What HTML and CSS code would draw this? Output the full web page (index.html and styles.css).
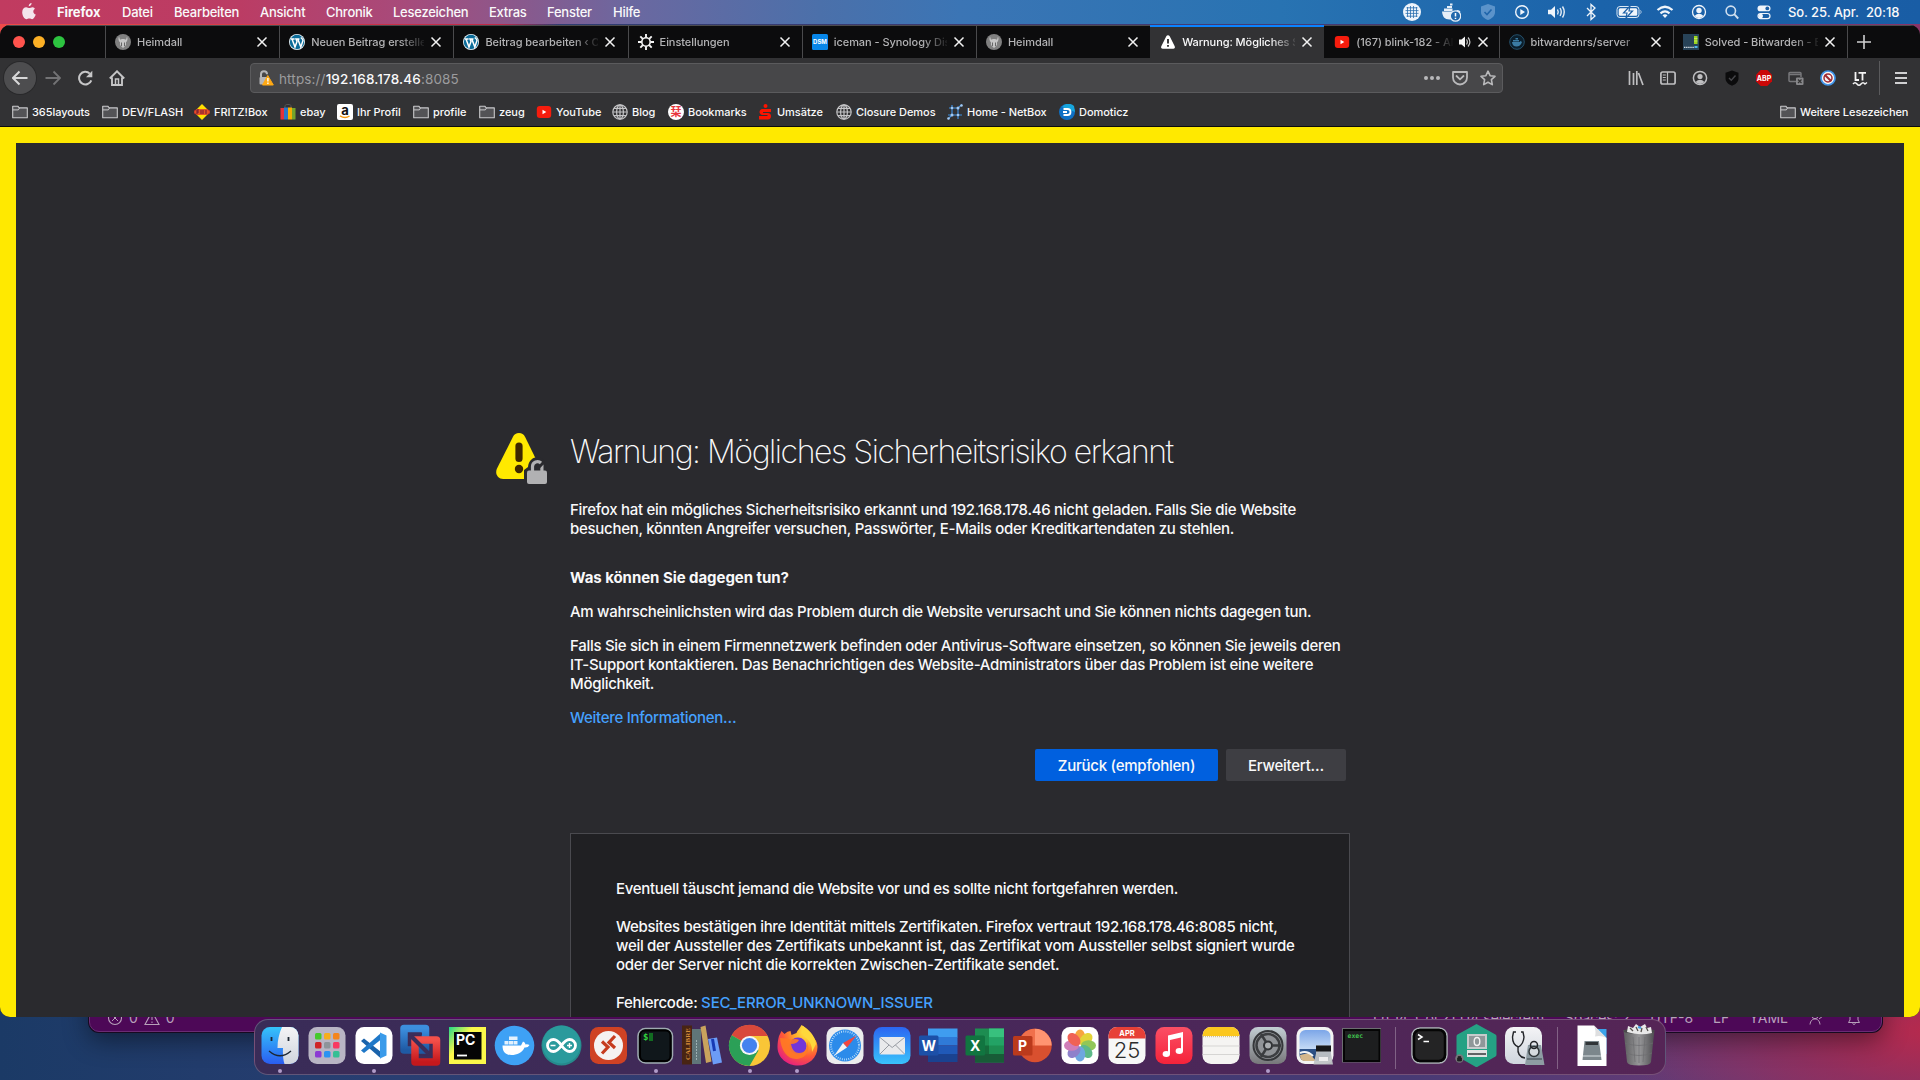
FILE: index.html
```html
<!DOCTYPE html>
<html lang="de">
<head>
<meta charset="utf-8">
<title>Warnung: Mögliches Sicherheitsrisiko erkannt</title>
<link rel="stylesheet" href="styles.css">
</head>
<body>
<svg class="defs" aria-hidden="true">
  <defs>
    <symbol id="folder" viewBox="0 0 16 16"><path d="M.7 13.8V2.2h5.1l1.4 1.7h8.1v9.9z" fill="#535356" stroke="#c9c9cb" stroke-width="1.1" stroke-linejoin="round"/><path d="M.7 5.9h5.6l1.2-1.8" fill="none" stroke="#c9c9cb"/></symbol>
    <symbol id="globe" viewBox="0 0 16 16"><g fill="none" stroke="#c4c4c6" stroke-width="1.2"><circle cx="8" cy="8" r="7.2"/><ellipse cx="8" cy="8" rx="3.4" ry="7.2"/><path d="M8 1v14M1 8h14M2 4.4h12M2 11.6h12"/></g></symbol>
    <symbol id="close" viewBox="0 0 12 12"><path d="M1.500 1.500l9 9m0-9l-9 9" stroke="#f2f2f2" stroke-width="1.500" fill="none"/></symbol>
    <symbol id="heimdall" viewBox="0 0 16 16"><circle cx="8" cy="8" r="8" fill="#808080"/><path d="M4 2.500c-1 2.500-.5 4.500 1 5.800L5 11l3 3 3-3v-2.700c1.500-1.300 2-3.300 1-5.800l-1 3.200C10 4.600 6 4.600 5 5.700z" fill="#c6c6c6"/><path d="M6.500 8.500v3.500m3-3.500v3.500" stroke="#666" fill="none"/></symbol>
    <symbol id="wordpress" viewBox="0 0 16 16"><circle cx="8" cy="8" r="8" fill="#e8f3f8"/><circle cx="8" cy="8" r="7.200" fill="#0b6c99"/><path d="M2 5h3.600M3 5l3 8 2-5.500L7 5h3.500M8.800 5l3 8 2.200-6.500c-.2-1.600-1.500-2.300-2.200-3" fill="none" stroke="#fff" stroke-width="1.500"/></symbol>
    <symbol id="youtube" viewBox="0 0 16 16"><rect x=".8" y="2" width="14.400" height="12" rx="3" fill="#f61c0d"/><path d="M6.500 5.700v4.600l3.800-2.300z" fill="#fff"/></symbol>
    <linearGradient id="gFinder" x2="0" y2="1"><stop stop-color="#35c4fb"/><stop offset="1" stop-color="#2a5df0"/></linearGradient>
    <linearGradient id="gGrey" x2="0" y2="1"><stop stop-color="#f4f4f6"/><stop offset="1" stop-color="#cfd5dd"/></linearGradient>
    <linearGradient id="gMail" x2="0" y2="1"><stop stop-color="#2b66f2"/><stop offset="1" stop-color="#39c3fb"/></linearGradient>
    <linearGradient id="gMusic" x2="0" y2="1"><stop stop-color="#fb4f65"/><stop offset="1" stop-color="#f5233a"/></linearGradient>
    <linearGradient id="gPy" x2="1" y2=".8"><stop stop-color="#21d789"/><stop offset=".4" stop-color="#fcf84a"/></linearGradient>
    <linearGradient id="gPref" x2="0" y2="1"><stop stop-color="#c3ced4"/><stop offset="1" stop-color="#77777a"/></linearGradient>
    <linearGradient id="gBlue" x2="0" y2="1"><stop stop-color="#3c8ede"/><stop offset="1" stop-color="#1f5aa4"/></linearGradient>
    <linearGradient id="gRed" x2="0" y2="1"><stop stop-color="#f4504a"/><stop offset="1" stop-color="#c5181c"/></linearGradient>
    <radialGradient id="gFox" cx=".75" cy=".15" r="1"><stop stop-color="#fff44f"/><stop offset=".3" stop-color="#ffb429"/><stop offset=".62" stop-color="#ff5a36"/><stop offset="1" stop-color="#e0158e"/></radialGradient>
    <linearGradient id="gTrash" x2="1"><stop stop-color="#5b5b5d"/><stop offset=".5" stop-color="#98989a"/><stop offset="1" stop-color="#4d4d50"/></linearGradient>
    <linearGradient id="gSky" x2="0" y2="1"><stop stop-color="#7ca6e8"/><stop offset=".6" stop-color="#c3d9f5"/><stop offset=".62" stop-color="#2d5389"/><stop offset="1" stop-color="#234472"/></linearGradient>
  </defs>
</svg>

<header class="menubar">
  <nav class="menus">
    <svg class="apple" viewBox="0 0 14 17"><path d="M9.600 0c.1 1.700-1.300 3.300-2.900 3.300C6.500 1.700 8 .2 9.600 0zM12.900 5.700c-2.500 1.600-1.900 4.800.9 5.900-.7 2-2.200 4.600-3.700 4.600-1 0-1.500-.6-2.800-.6s-1.900.6-2.800.6C2.400 16.200.2 12.500.2 9.200c0-3.200 2-5 4-5 1.300 0 2.300.8 3.100.8.700 0 2-.9 3.400-.8 1 .1 1.800.6 2.200 1.500z" fill="#f4e4ec"/></svg>
    <b>Firefox</b><span>Datei</span><span>Bearbeiten</span><span>Ansicht</span><span>Chronik</span><span>Lesezeichen</span><span>Extras</span><span>Fenster</span><span>Hilfe</span>
  </nav>
  <div class="status">
    <svg viewBox="0 0 20 20"><circle cx="10" cy="10" r="9" fill="#edf4fb"/><path d="M4.500 5.800h11M3.500 8.600h13M3.500 11.400h13M4.500 14.200h11M5.500 5v10M8.500 4v12M11.500 4v12M14.500 5v10" stroke="#2a6eaf" stroke-width=".8"/></svg>
    <svg viewBox="0 0 20 20"><path d="M1 9.500h13l2.500-1.500c1.500 0 2 1 3 1.500-1 1-2 1.500-3 1.500-2 5-5 6.500-8 6.500-5 0-7-3-7.500-8z" fill="#e5eef8"/><path d="M3 6.500h8.500v2.500H3zM6 4h5v2H6zM9 1.500h2.500v2H9z" fill="#e5eef8"/><circle cx="14.500" cy="14" r="5.200" fill="#2268ac" stroke="#e5eef8" stroke-width="1.300"/><path d="M14.500 11v3.500m0 1.200v1.300" stroke="#fff" stroke-width="1.500"/></svg>
    <svg viewBox="0 0 20 20"><path d="M10 2l7 2.500V10c0 4-3 6.500-7 8-4-1.500-7-4-7-8V4.500z" fill="#5b93ca"/><path d="M6.500 10l2.500 2.500 4.500-5" fill="none" stroke="#1f65aa" stroke-width="1.600"/></svg>
    <svg viewBox="0 0 20 20"><circle cx="10" cy="10" r="6.300" fill="none" stroke="#f0f5fb" stroke-width="1.400"/><path d="M8.300 7v6l4.700-3z" fill="#f0f5fb"/></svg>
    <svg viewBox="0 0 20 20"><path d="M1 7.800h3L8 4v12l-4-3.800H1z" fill="#f0f5fb"/><path d="M10.500 7.500q1.500 2.500 0 5M13 6q2.500 4 0 8M15.500 4.500q3.500 5.500 0 11" fill="none" stroke="#e6eef7" stroke-width="1.400"/></svg>
    <svg viewBox="0 0 20 20"><path d="M6 6l8 8-4 3.500v-15L14 6l-8 8" fill="none" stroke="#f0f5fb" stroke-width="1.300"/></svg>
    <svg viewBox="0 0 28 20"><rect x="2" y="4.500" width="22" height="11" rx="3" fill="none" stroke="#dce8f4"/><rect x="3.700" y="6.200" width="18.600" height="7.600" rx="1.500" fill="#f0f5fb"/><path d="M15 4l-6.500 7h3.500l-1 5 6.500-7H14z" fill="#f4f8fc" stroke="#1d60a6" stroke-width="1.200"/><path d="M25.500 8.300q1.500 1.700 0 3.400" stroke="#a9c5e1" fill="none"/></svg>
    <svg viewBox="0 0 20 20"><g fill="none" stroke="#f0f5fb" stroke-width="2.200"><path d="M2.500 8q7.500-6.500 15 0M5.500 11.300q4.500-3.800 9 0"/></g><path d="M7.500 13.300q2.500-2 5 0L10 16z" fill="#f0f5fb"/></svg>
    <svg viewBox="0 0 20 20"><circle cx="10" cy="10" r="6.500" fill="none" stroke="#f0f5fb" stroke-width="1.300"/><circle cx="10" cy="8.500" r="2.700" fill="#f0f5fb"/><path d="M5.500 14q4.500-4.500 9 0-4.500 4-9 0z" fill="#f0f5fb"/></svg>
    <svg viewBox="0 0 20 20"><circle cx="8.800" cy="8.800" r="4.700" fill="none" stroke="#cfdfef" stroke-width="1.600"/><path d="M12.200 12.200l4 4.300" stroke="#cfdfef" stroke-width="1.900"/></svg>
    <svg viewBox="0 0 20 20"><rect x="3.500" y="3.500" width="13" height="5.800" rx="2.900" fill="#f0f5fb"/><circle cx="13.300" cy="6.400" r="1.900" fill="#1b5fa6"/><rect x="4" y="11.500" width="12" height="5.200" rx="2.600" fill="none" stroke="#f0f5fb" stroke-width="1.200"/><circle cx="6.700" cy="14.100" r="2.300" fill="#f0f5fb"/></svg>
    <span class="date">So. 25. Apr.</span><span class="time">20:18</span>
  </div>
</header>

<section class="editor">
  <div class="editor-left">
    <svg viewBox="0 0 16 16"><circle cx="8" cy="8" r="6.500" fill="none" stroke="#b7a1ba" stroke-width="1.100"/><path d="M5 5l6 6m0-6l-6 6" stroke="#b7a1ba"/></svg><span>0</span>
    <svg viewBox="0 0 16 16"><path d="M8 1.500l7 13H1z" fill="none" stroke="#b7a1ba" stroke-width="1.100"/><path d="M8 6v4m0 1.500v1.500" stroke="#b7a1ba"/></svg><span>0</span>
  </div>
  <div class="editor-right">
    <span>Ln 14, Col 21 (14 selected)</span><span>Spaces: 2</span><span>UTF-8</span><span>LF</span><span>YAML</span>
    <svg viewBox="0 0 16 16"><circle cx="7" cy="5.500" r="3.200" fill="none" stroke="#b7a1ba"/><path d="M2 14.500c.5-4 2.500-5.500 5-5.500s4.500 1.500 5 5.500M11 9l4-3" fill="none" stroke="#b7a1ba"/></svg>
    <svg viewBox="0 0 16 16"><path d="M2.500 12.500h11L12 10V6a4 4 0 0 0-8 0v4zM6.500 13.500q1.500 2 3 0" fill="none" stroke="#b7a1ba"/></svg>
  </div>
</section>

<main class="window">
  <div class="tabs">
    <div class="lights"><i class="red"></i><i class="amber"></i><i class="green"></i></div>
    <div class="tab"><svg class="fav"><use href="#heimdall"/></svg><span>Heimdall</span><svg class="x"><use href="#close"/></svg></div>
    <div class="tab"><svg class="fav"><use href="#wordpress"/></svg><span>Neuen Beitrag erstellen</span><svg class="x"><use href="#close"/></svg></div>
    <div class="tab"><svg class="fav"><use href="#wordpress"/></svg><span>Beitrag bearbeiten ‹ Con</span><svg class="x"><use href="#close"/></svg></div>
    <div class="tab"><svg class="fav" viewBox="0 0 16 16"><circle cx="8" cy="8" r="4.200" fill="none" stroke="#f5f5f5" stroke-width="1.600"/><path d="M8 0v3.500M8 12.500V16M0 8h3.500M12.500 8H16M2.300 2.300l2.500 2.500M11.200 11.200l2.500 2.500M13.700 2.300l-2.500 2.500M4.800 11.200l-2.500 2.500" stroke="#f5f5f5" stroke-width="1.900"/></svg><span>Einstellungen</span><svg class="x"><use href="#close"/></svg></div>
    <div class="tab"><svg class="fav" viewBox="0 0 16 16"><rect width="16" height="16" rx="1.500" fill="#0786e8"/><text x="8" y="10.300" text-anchor="middle" class="dsm">DSM</text></svg><span>iceman - Synology DiskSt</span><svg class="x"><use href="#close"/></svg></div>
    <div class="tab"><svg class="fav"><use href="#heimdall"/></svg><span>Heimdall</span><svg class="x"><use href="#close"/></svg></div>
    <div class="tab active"><svg class="fav" viewBox="0 0 16 16"><path d="M8 1.200c.8 0 1.300.4 1.700 1.100l5 10c.7 1.400-.1 2.500-1.500 2.500H2.800c-1.400 0-2.200-1.100-1.500-2.500l5-10C6.700 1.600 7.200 1.200 8 1.200z" fill="#fff"/><path d="M8 5v4.500m0 1.500v1.800" stroke="#323234" stroke-width="1.900"/></svg><span>Warnung: Mögliches Siche</span><svg class="x"><use href="#close"/></svg></div>
    <div class="tab noisy"><svg class="fav"><use href="#youtube"/></svg><span>(167) blink-182 - All</span><svg class="snd" viewBox="0 0 14 14"><path d="M1 4.500h2.500L7 1.500v11L3.500 9.500H1z" fill="#f5f5f5"/><path d="M8.500 4.500q1.700 2.500 0 5M10 2.500q3.800 4.500 0 9" fill="none" stroke="#ccc" stroke-width="1.200"/></svg><svg class="x"><use href="#close"/></svg></div>
    <div class="tab"><svg class="fav" viewBox="0 0 16 16"><circle cx="8" cy="8" r="7.300" fill="#0b1e2b" stroke="#25506b"/><path d="M3 8h7.500l1-1 1.500 1c-1 3-3 4.500-5.500 4.500S3.200 11 3 8zM4 6h6v1.500H4zM6.500 4h2.500v1.500H6.500z" fill="#3b7ba3"/></svg><span>bitwardenrs/server</span><svg class="x"><use href="#close"/></svg></div>
    <div class="tab"><svg class="fav" viewBox="0 0 16 16"><rect width="16" height="16" fill="#284358"/><path d="M11 2h3.500v8H11z" fill="#9ad51e"/><path d="M11 4.500h3.500M11 7h3.500" stroke="#dff08a" stroke-width=".6"/><path d="M11.500 12h3v2h-3z" fill="#4fb5e8"/><path d="M1 13.300h10" stroke="#d8dfe4" stroke-width="1.300" stroke-dasharray="1.400 .7"/></svg><span>Solved - Bitwarden - Buil</span><svg class="x"><use href="#close"/></svg></div>
    <div class="newtab"><svg viewBox="0 0 16 16"><path d="M8 1v14M1 8h14" stroke="#d0d0d1" stroke-width="1.600"/></svg></div>
  </div>

  <div class="toolbar">
    <div class="nav">
      <span class="back"><svg viewBox="0 0 16 16"><path d="M15.500 8H1.200M7.500 1.500L1 8l6.500 6.500" fill="none" stroke="#d7d7d8" stroke-width="2"/></svg></span>
      <svg viewBox="0 0 16 16"><path d="M.5 8h14.300M8.500 1.500L15 8l-6.500 6.500" fill="none" stroke="#737375" stroke-width="1.800"/></svg>
      <svg viewBox="0 0 16 16"><path d="M14.300 10.300A6.300 6.300 0 1 1 12.800 3.600" fill="none" stroke="#c6c6c7" stroke-width="2"/><path d="M15.300.8v6.400H9z" fill="#c6c6c7"/></svg>
      <svg viewBox="0 0 16 16"><path d="M.8 8.500L8 1.300l7.200 7.200M3 7.500v7.500h10V7.500" fill="none" stroke="#c6c6c7" stroke-width="1.900"/><path d="M6.500 15V9h3v6" fill="none" stroke="#c6c6c7" stroke-width="1.500"/></svg>
    </div>
    <div class="urlbar">
      <svg class="lock" viewBox="0 0 16 16"><path d="M3 7V4.200a3 3 0 0 1 6 0" fill="none" stroke="#b6b6b8" stroke-width="2"/><rect x="1.500" y="7" width="9" height="7.500" rx="1" fill="#b6b6b8"/><path d="M9.800 5.500L15.300 15H4.500z" fill="#ffa914" stroke="#ffa914" stroke-linejoin="round"/><path d="M9.900 8v3.500m0 1v1.500" stroke="#fff" stroke-width="1.400"/></svg>
      <span class="url">https://<b>192.168.178.46</b>:8085</span>
      <svg viewBox="0 0 16 16"><g fill="#b9b9bb"><circle cx="2" cy="8" r="2"/><circle cx="8" cy="8" r="2"/><circle cx="14" cy="8" r="2"/></g></svg>
      <svg viewBox="0 0 16 16"><path d="M1 2h14v5.500a7 7 0 0 1-14 0z" fill="none" stroke="#b9b9bb" stroke-width="1.800" stroke-linejoin="round"/><path d="M4.500 6L8 9.300 11.500 6" fill="none" stroke="#b9b9bb" stroke-width="1.800" stroke-linecap="round"/></svg>
      <svg viewBox="0 0 16 16"><path d="M8 1.200l2.100 4.500 4.900.6-3.600 3.400.9 4.900L8 12.200l-4.300 2.400.9-4.900L1 6.300l4.900-.6z" fill="none" stroke="#b9b9bb" stroke-width="1.600" stroke-linejoin="round"/></svg>
    </div>
    <div class="tools">
      <svg viewBox="0 0 16 16"><path d="M1.500 1v14M5.500 3v12M8.800 1v14M10.500 3l4.500 12" fill="none" stroke="#bebec0" stroke-width="1.700"/></svg>
      <svg viewBox="0 0 16 16"><rect x=".9" y="2" width="14.200" height="12" rx="1.800" fill="none" stroke="#bebec0" stroke-width="1.700"/><path d="M7.500 2v12M2.800 5h3M2.800 7.500h3M2.800 10h3" stroke="#bebec0" stroke-width="1.200"/></svg>
      <svg viewBox="0 0 16 16"><circle cx="8" cy="8" r="6.600" fill="none" stroke="#bebec0" stroke-width="1.500"/><circle cx="8" cy="6.500" r="2.600" fill="#bebec0"/><path d="M3.500 12q4.500-4.500 9 0-4.500 4-9 0z" fill="#bebec0"/></svg>
      <svg viewBox="0 0 16 16"><path d="M8 .5l6.500 2.300V8c0 4-2.700 6.200-6.500 7.700C4.200 14.200 1.500 12 1.500 8V2.800z" fill="#0b0b0c"/><path d="M5 8l2.300 2.300L11.500 5.500" fill="none" stroke="#46464a" stroke-width="1.400"/></svg>
      <svg viewBox="0 0 16 16"><path d="M4.700 0h6.600L16 4.700v6.600L11.300 16H4.700L0 11.300V4.700z" fill="#cb0808"/><text x="8" y="10.700" text-anchor="middle" class="abp">ABP</text></svg>
      <svg viewBox="0 0 16 16"><path d="M9 11.500H2a1 1 0 0 1-1-1V3.500a1 1 0 0 1 1-1h10a1 1 0 0 1 1 1V7M1 4.500h12" fill="none" stroke="#77777a" stroke-width="1.500"/><rect x="8" y="7.500" width="7.500" height="7.500" rx="1" fill="#87878a"/><path d="M10 9.500l3.500 3.500m0-3.500L10 13" stroke="#333" stroke-width="1.200"/></svg>
      <svg viewBox="0 0 16 16"><circle cx="8" cy="8" r="7" fill="#f4f4f4" stroke="#3f93e8" stroke-width="1.700"/><circle cx="8" cy="8" r="4" fill="none" stroke="#a12a32" stroke-width="1.500"/><path d="M4.700 4.700l6.600 6.600" stroke="#a12a32" stroke-width="2"/></svg>
      <svg viewBox="0 0 16 16"><path d="M3.500 2v8H7M6.500 2.800H14M10.500 3v7.500" fill="none" stroke="#f4f4f4" stroke-width="1.800"/><path d="M1 14q2-2.500 4 0t4 0 4 0l2-1.500" fill="none" stroke="#f4f4f4" stroke-width="1.500"/></svg>
      <i class="bar"></i>
      <svg class="burger" viewBox="0 0 12 14"><path d="M0 2h12M0 7h12M0 12h12" stroke="#d0d0d1" stroke-width="1.800"/></svg>
    </div>
  </div>

  <div class="bookmarks">
    <a><svg><use href="#folder"/></svg>365layouts</a>
    <a><svg><use href="#folder"/></svg>DEV/FLASH</a>
    <a><svg viewBox="0 0 16 16"><path d="M8 0l5 5 3 3-3 3-5 5-5-5-3-3 3-3z" fill="#ffe000"/><path d="M0 6.500l3-1.500h10l3 1.500v3L13 11H3L0 9.500z" fill="#dc2430" opacity=".75"/><path d="M3 6v4m0-4h2m-2 2h2m2-2v4m2-4v4m3-4v4" stroke="#6d1638" fill="none"/></svg>FRITZ!Box</a>
    <a><svg viewBox="0 0 16 16"><path d="M5 4V1.800C5 0 11 0 11 1.800V4" fill="none" stroke="#555"/><path d="M.5 4H4v11.500H.5z" fill="#e53238"/><path d="M4 3.500h4v12H4z" fill="#2878c8"/><path d="M8 3.500h4v12H8z" fill="#f5af02"/><path d="M12 4h3.500v11.500H12z" fill="#74a52c"/></svg>ebay</a>
    <a><svg viewBox="0 0 16 16"><rect width="16" height="16" rx="2" fill="#fff"/><text x="8" y="10.500" text-anchor="middle" class="ama">a</text><path d="M3 11.800q5 3.200 9.500.2" fill="none" stroke="#f59a12" stroke-width="1.500"/></svg>Ihr Profil</a>
    <a><svg><use href="#folder"/></svg>profile</a>
    <a><svg><use href="#folder"/></svg>zeug</a>
    <a><svg><use href="#youtube"/></svg>YouTube</a>
    <a><svg><use href="#globe"/></svg>Blog</a>
    <a><svg viewBox="0 0 16 16"><circle cx="8" cy="8" r="8" fill="#fff"/><text x="8" y="12" text-anchor="middle" class="kanji">栞</text></svg>Bookmarks</a>
    <a><svg viewBox="0 0 16 16"><circle cx="8.500" cy="2" r="2" fill="#fb1400"/><path d="M14 5H5.500C1.500 5 1.500 11 5.500 11H10.500v1H2v3.500h9c4 0 4-6.500 0-6.500H6V8h8z" fill="#fb1400"/></svg>Umsätze</a>
    <a><svg><use href="#globe"/></svg>Closure Demos</a>
    <a><svg viewBox="0 0 16 16"><path d="M5 1v10H1M1 15l4-4h10M11 15V4M2 4h9l4-3.500" fill="none" stroke="#3d8ee0" stroke-width="1.200"/><g fill="#a5c8ef"><circle cx="5" cy="4" r="1.300"/><circle cx="11" cy="11" r="1.300"/><circle cx="5" cy="11" r="1.500"/><circle cx="11" cy="4" r="1.500"/><circle cx="1.500" cy="14.500" r="1.300"/><circle cx="14.500" cy="1.500" r="1.300"/></g></svg>Home - NetBox</a>
    <a><svg viewBox="0 0 16 16"><circle cx="8" cy="8" r="8" fill="#0e6fc4"/><path d="M3 3a8 8 0 0 1 12-1l1 6z" fill="#17a5dc"/><path d="M4.500 5H8.500a3 3 0 0 1 0 6H4.500M4 8h4" fill="none" stroke="#fff" stroke-width="1.800"/></svg>Domoticz</a>
    <a class="more"><svg><use href="#folder"/></svg>Weitere Lesezeichen</a>
  </div>

  <div class="viewport">
    <article class="warning">
      <svg class="warn-icon" viewBox="0 0 52 52"><path d="M23 0c2.800 0 4.700 1.300 6 3.700l15.500 31.800c2.300 5-.5 10.500-6 10.500H7.200c-5.500 0-8.600-5.500-6.200-10.500L17 3.700C18.300 1.300 20.200 0 23 0z" fill="#ffe900"/><path d="M19.400 13a3.600 3.600 0 0 1 7.200 0v12.500a3.600 3.600 0 0 1-7.200 0z" fill="#3e2800"/><circle cx="23" cy="36" r="4.200" fill="#3e2800"/><path d="M28 52V37l4-3c1-13 18-13 18 0l2 4v14z" fill="#2a2a2e"/><path d="M36.500 38v-4.500a5 5 0 0 1 8.500-3.500" fill="none" stroke="#b1b1b3" stroke-width="3.200"/><path d="M47.500 31.500V38h-3.200v-3z" fill="#b1b1b3"/><rect x="31" y="37.500" width="20" height="13.500" rx="2" fill="#b1b1b3"/></svg>
      <h1>Warnung: Mögliches Sicherheitsrisiko erkannt</h1>
      <div class="copy">
        <p>Firefox hat ein mögliches Sicherheitsrisiko erkannt und 192.168.178.46 nicht geladen. Falls Sie die Website<br>besuchen, könnten Angreifer versuchen, Passwörter, E-Mails oder Kreditkartendaten zu stehlen.</p>
        <h2>Was können Sie dagegen tun?</h2>
        <p>Am wahrscheinlichsten wird das Problem durch die Website verursacht und Sie können nichts dagegen tun.</p>
        <p>Falls Sie sich in einem Firmennetzwerk befinden oder Antivirus-Software einsetzen, so können Sie jeweils deren<br>IT-Support kontaktieren. Das Benachrichtigen des Website-Administrators über das Problem ist eine weitere<br>Möglichkeit.</p>
        <p><a class="link">Weitere Informationen…</a></p>
        <div class="buttons"><button class="primary">Zurück (empfohlen)</button><button>Erweitert…</button></div>
      </div>
      <div class="panel">
        <p>Eventuell täuscht jemand die Website vor und es sollte nicht fortgefahren werden.</p>
        <p>Websites bestätigen ihre Identität mittels Zertifikaten. Firefox vertraut 192.168.178.46:8085 nicht,<br>weil der Aussteller des Zertifikats unbekannt ist, das Zertifikat vom Aussteller selbst signiert wurde<br>oder der Server nicht die korrekten Zwischen-Zertifikate sendet.</p>
        <p>Fehlercode: <a class="link code">SEC_ERROR_UNKNOWN_ISSUER</a></p>
      </div>
    </article>
  </div>
</main>

<footer class="dock">
  <!-- Finder -->
  <span class="app on"><svg viewBox="0 0 47 48"><clipPath id="cf"><rect x="5.500" y="6" width="37" height="37" rx="8.500"/></clipPath><g clip-path="url(#cf)"><rect x="5" y="6" width="38" height="37" fill="url(#gFinder)"/><path d="M26 6c-3 7-4.500 13-4.500 21h5.500c-.3 6 0 11 1.500 16h15V6z" fill="url(#gGrey)"/></g><path d="M15.500 16v4M32.500 16v4" stroke="#1c2733" stroke-width="1.800"/><path d="M13 30q11 9.500 22 0" fill="none" stroke="#1c2733" stroke-width="1.300"/></svg></span>
  <!-- Launchpad -->
  <span class="app"><svg viewBox="0 0 47 48"><rect x="5.500" y="6" width="37" height="37" rx="8.500" fill="#b9b5c4"/><g><rect x="12" y="12" width="6.500" height="6.500" rx="1.500" fill="#46c92b"/><rect x="21" y="12" width="6.500" height="6.500" rx="1.500" fill="#f6ae1b"/><rect x="30" y="12" width="6.500" height="6.500" rx="1.500" fill="#f5851b"/><rect x="12" y="21" width="6.500" height="6.500" rx="1.500" fill="#cf2425"/><rect x="21" y="21" width="6.500" height="6.500" rx="1.500" fill="#8e949a"/><rect x="30" y="21" width="6.500" height="6.500" rx="1.500" fill="#f83a62"/><rect x="12" y="30" width="6.500" height="6.500" rx="1.500" fill="#8c3bd3"/><rect x="21" y="30" width="6.500" height="6.500" rx="1.500" fill="#2b93f2"/><rect x="30" y="30" width="6.500" height="6.500" rx="1.500" fill="#35bf94"/></g></svg></span>
  <!-- Visual Studio Code -->
  <span class="app on"><svg viewBox="0 0 47 48"><rect x="5.500" y="6" width="37" height="37" rx="8.500" fill="#fff"/><path d="M11 20l3-2.500L31 31v6.500z" fill="#1a63ab"/><path d="M11 29.500l3 2.500L31 18.500V12z" fill="#1f78c8"/><path d="M30 11.500l6.500 3v20L30 37.500z" fill="#3a9bea"/></svg></span>
  <!-- VMware Fusion -->
  <span class="app"><svg viewBox="0 0 47 48"><rect x="7" y="7.500" width="21.500" height="21.500" fill="none" stroke="url(#gBlue)" stroke-width="7.500" stroke-linejoin="round"/><path d="M18 19h21.500v22H18z" fill="none" stroke="url(#gRed)" stroke-width="7.500" stroke-linejoin="round"/><path d="M18 15h14v-4H18z" fill="none"/><path d="M14.500 15.500l17 17" stroke="#3b2d5a" stroke-width="4"/><path d="M13 25V13h12M34 25v11H22" stroke="#3b2d5a" stroke-width="2" fill="none"/></svg></span>
  <!-- PyCharm -->
  <span class="app"><svg viewBox="0 0 47 48"><rect x="5" y="6" width="37" height="37" fill="url(#gPy)"/><rect x="10" y="11" width="27.500" height="27.500" fill="#050505"/><text x="12" y="24" class="pc">PC</text><path d="M13 34.500h10" stroke="#fff" stroke-width="1.800"/></svg></span>
  <!-- Docker -->
  <span class="app"><svg viewBox="0 0 47 48"><circle cx="23.500" cy="24.500" r="19.800" fill="#3ea1f5"/><path d="M11.500 24.500H30l2-4q2.500 1 2.500 3 2-.5 4 .5-1.500 3-5 2.500C31 32 26 34 20.500 34c-6 0-9-3-9-9.500z" fill="#fff"/><path d="M13.500 20h4v3.500h-4zM18 20h4v3.500h-4zM22.500 20h4v3.500h-4zM18 15.500h8.500V19H18z" fill="#e3f1fd"/></svg></span>
  <!-- Arduino -->
  <span class="app"><svg viewBox="0 0 47 48"><circle cx="23.500" cy="24.500" r="20" fill="#268a8c"/><circle cx="23.500" cy="23.500" r="19" fill="#2a9a9c"/><path d="M23.500 24.500C20 19.500 17.500 18.500 15.500 18.500a6 6 0 0 0 0 12c2 0 4.500-1 8-6s6-6 8-6a6 6 0 0 1 0 12c-2 0-4.500-1-8-6z" fill="none" stroke="#fff" stroke-width="2.800"/><path d="M12.500 24.500h5M29 24.500h5m-2.500-2.500v5" stroke="#fff" stroke-width="1.400"/></svg></span>
  <!-- Remote Desktop -->
  <span class="app"><svg viewBox="0 0 47 48"><rect x="5" y="6" width="37" height="37" rx="8.500" fill="#cf4224"/><circle cx="23.500" cy="24.500" r="14.500" fill="#f5f2f2"/><path d="M17 20.500l6 5.500-6 6.500M30 15l-6 6.500 6 5.500" fill="none" stroke="#c63c20" stroke-width="3.200"/></svg></span>
  <!-- iTerm -->
  <span class="app on"><svg viewBox="0 0 47 48"><rect x="6" y="7.500" width="34.500" height="34.500" rx="7.500" fill="#10171b" stroke="#9faab0" stroke-width="1.500"/><rect x="8" y="9.500" width="30.500" height="30.500" rx="5" fill="none" stroke="#000" stroke-width="2"/><text x="11" y="19" class="term green-t">$</text><path d="M17 12h4v8h-4z" fill="#126c21"/></svg></span>
  <!-- Calibre -->
  <span class="app"><svg viewBox="0 0 47 48"><rect x="3" y="4.500" width="10" height="39" fill="#482413"/><rect x="13" y="8" width="9" height="35" fill="#607579"/><path d="M21.500 6l5-1.500 6 36-5.500 1.500z" fill="#c9a35d"/><path d="M29 18l9-1.500 5 25-9 2z" fill="#6c9cf6"/><path d="M33.500 18l2 12" stroke="#183ab4" stroke-width="3"/><text transform="rotate(-90 10.500 39)" x="10.500" y="39" class="cal">CALIBRE</text><path d="M17.500 19v21" stroke="#9db1b3" stroke-dasharray="2 1"/></svg></span>
  <!-- Chrome -->
  <span class="app on"><svg viewBox="0 0 47 48"><circle cx="23.500" cy="24.500" r="20.500" fill="#f9c637"/><path d="M23.500 24.500L5.700 14.200a20.500 20.500 0 0 1 35.600 0L42 15H23.500z" fill="#d9483b"/><path d="M23.500 24.500L5.700 14.200A20.500 20.500 0 0 0 23.500 45l9-15.500z" fill="#2ba057"/><path d="M5.700 14.200L15 30l8.500-5.500V15L6.200 13.500z" fill="none"/><circle cx="23.500" cy="24.500" r="9.600" fill="#f5f5f5"/><circle cx="23.500" cy="24.500" r="7.600" fill="#4482ef"/></svg></span>
  <!-- Firefox -->
  <span class="app on"><svg viewBox="0 0 47 48"><path d="M5 15l2.500-5 3 3q3-3 6-3l1 4 5-2c1-3 3-4 5-8 5 3 5 6 6 8 5 3 10 7 10 14 0 11-9 18.500-19.500 18.500S3.500 37 3.500 26c0-4 .5-7 1.500-11z" fill="url(#gFox)"/><circle cx="24" cy="25" r="8.500" fill="#7236d8"/><path d="M6 17q8 0 11 2 4-2 8 0-2 4-8 4c1 6 4 9 8 9 6 0 9-4 8-11 4 8-1 17-11 17-9 0-15-9-16-21z" fill="#ff7a24" opacity=".9"/><path d="M31 16c-3-4-3-7-2-11 5 3 12 9 13 18l-4 8c0-6-1-10-7-15z" fill="#ffd83b"/></svg></span>
  <!-- Safari -->
  <span class="app"><svg viewBox="0 0 47 48"><rect x="5.500" y="6" width="37" height="37" rx="8.500" fill="#ececee"/><circle cx="24" cy="24.500" r="16" fill="#2c8bea"/><circle cx="24" cy="24.500" r="14" fill="none" stroke="#c6e4fc" stroke-width="2" stroke-dasharray=".8 1.400"/><path d="M35.500 14.500L22 22l4 4.500z" fill="#f2463f"/><path d="M13 35l9-13 4 4.500z" fill="#f3f3f3"/></svg></span>
  <!-- Mail -->
  <span class="app"><svg viewBox="0 0 47 48"><rect x="5.500" y="6" width="37" height="37" rx="8.500" fill="url(#gMail)"/><rect x="11.500" y="16" width="25.500" height="17.500" rx="1.500" fill="#e9eaec"/><path d="M12 16.500l12.200 10L36.500 16.500M12 33l9-9M36.500 33l-9-9" fill="none" stroke="#989ca3"/></svg></span>
  <!-- Word -->
  <span class="app"><svg viewBox="0 0 47 48"><path d="M13 7.500h29.500v9H13z" fill="#3f9df0"/><path d="M13 16h29.500v8.500H13z" fill="#2f7ad8"/><path d="M13 24.500h29.500V33H13z" fill="#2059b8"/><path d="M13 33h29.500v8H13z" fill="#1a4290"/><rect x="4" y="14.500" width="19.500" height="20" rx="1.500" fill="#1c50a8"/><text x="13.700" y="29.500" text-anchor="middle" class="office">W</text></svg></span>
  <!-- Excel -->
  <span class="app"><svg viewBox="0 0 47 48"><path d="M13 7.500h29v34H13z" fill="#1d8d51"/><path d="M27 7.500h15v9H27z" fill="#38c17e"/><path d="M27 16.500h15v8H27z" fill="#23a365"/><path d="M13 24.500h14V41H13z" fill="#156b3b"/><path d="M27 33h15v8.500H13V33z" fill="#185c37"/><rect x="3.500" y="14.500" width="19.500" height="20" rx="1.500" fill="#117540"/><text x="13.200" y="29.500" text-anchor="middle" class="office">X</text></svg></span>
  <!-- PowerPoint -->
  <span class="app"><svg viewBox="0 0 47 48"><circle cx="26" cy="24.500" r="16.700" fill="#d9502f"/><path d="M26 7.800v16.700h16.700A16.700 16.700 0 0 0 26 7.800z" fill="#ff9471"/><path d="M26 7.800A16.700 16.700 0 0 0 9.300 24.500H26z" fill="#f0704c"/><rect x="4" y="15" width="19.500" height="19.500" rx="1.500" fill="#bb3a1c"/><text x="13.500" y="29.800" text-anchor="middle" class="office">P</text></svg></span>
  <!-- Photos -->
  <span class="app"><svg viewBox="0 0 47 48"><rect x="5.500" y="6" width="37" height="37" rx="8.500" fill="#fff"/><g opacity=".88"><ellipse cx="24" cy="16" rx="5.300" ry="7.500" fill="#f79824"/><ellipse cx="24" cy="16" rx="5.300" ry="7.500" fill="#e0cf1d" transform="rotate(45 24 24.500)"/><ellipse cx="24" cy="16" rx="5.300" ry="7.500" fill="#82bf42" transform="rotate(90 24 24.500)"/><ellipse cx="24" cy="16" rx="5.300" ry="7.500" fill="#47b079" transform="rotate(135 24 24.500)"/><ellipse cx="24" cy="16" rx="5.300" ry="7.500" fill="#5b9bdc" transform="rotate(180 24 24.500)"/><ellipse cx="24" cy="16" rx="5.300" ry="7.500" fill="#7f70c4" transform="rotate(225 24 24.500)"/><ellipse cx="24" cy="16" rx="5.300" ry="7.500" fill="#ca6caf" transform="rotate(270 24 24.500)"/><ellipse cx="24" cy="16" rx="5.300" ry="7.500" fill="#ee4d3e" transform="rotate(315 24 24.500)"/></g></svg></span>
  <!-- Calendar -->
  <span class="app"><svg viewBox="0 0 47 48"><rect x="5.500" y="6" width="37" height="37" rx="8.500" fill="#f7f7f7"/><path d="M5.500 17.500v-3A8.500 8.500 0 0 1 14 6h20a8.500 8.500 0 0 1 8.500 8.500v3z" fill="#e74037"/><text x="24" y="14.800" text-anchor="middle" class="cal-m">APR</text><text x="24" y="37" text-anchor="middle" class="cal-d">25</text></svg></span>
  <!-- Music -->
  <span class="app"><svg viewBox="0 0 47 48"><rect x="5.500" y="6" width="37" height="37" rx="8.500" fill="url(#gMusic)"/><path d="M19 33V16l13-3v17" fill="none" stroke="#fff" stroke-width="2"/><path d="M18 14.500l15-3.500v5l-15 3.500z" fill="#fff"/><ellipse cx="16.300" cy="33" rx="3.700" ry="3" fill="#fff"/><ellipse cx="29.300" cy="30" rx="3.700" ry="3" fill="#fff"/></svg></span>
  <!-- Notes -->
  <span class="app"><svg viewBox="0 0 47 48"><rect x="5.500" y="6" width="37" height="37" rx="8.500" fill="#f5f4f2"/><path d="M5.500 15v-.5A8.500 8.500 0 0 1 14 6h20a8.500 8.500 0 0 1 8.500 8.500v.5z" fill="#fbc71f"/><path d="M5.500 25h37M5.500 33.500h37" stroke="#d6d5d3"/><path d="M6 15.700h36" stroke="#c7b782" stroke-dasharray="1 1"/></svg></span>
  <!-- System preferences -->
  <span class="app on"><svg viewBox="0 0 47 48"><rect x="5.500" y="6" width="37" height="37" rx="8.500" fill="url(#gPref)"/><circle cx="24" cy="24.500" r="14.500" fill="#909397" stroke="#35373a" stroke-width="2"/><circle cx="24" cy="24.500" r="11.500" fill="none" stroke="#3c3e41" stroke-width="2.500"/><circle cx="24" cy="24.500" r="4" fill="#aaadb0" stroke="#303235" stroke-width="2"/><path d="M28 24.500h9M22 21l-5-8M22 28l-5 8" stroke="#3a3c3f" stroke-width="2.500"/></svg></span>
  <!-- Preview -->
  <span class="app"><svg viewBox="0 0 47 48"><rect x="5.500" y="6" width="37" height="37" rx="8.500" fill="#f3f3f3"/><rect x="8.500" y="9" width="31" height="31" rx="6" fill="url(#gSky)"/><path d="M9 34l9-2 7 8H14q-5 0-5-6z" fill="#d4b78b"/><path d="M9 32q7-3 13 3" fill="none" stroke="#f2f5f7" stroke-width="2"/><path d="M25 24.500h15v8l2 11H22.500l2.500-11z" fill="#bfc3c5" opacity=".95"/><path d="M25 24.500h15v6H25z" fill="#161719"/><path d="M28 36h9v4h-9z" fill="#eee"/></svg></span>
  <!-- exec -->
  <span class="app"><svg viewBox="0 0 47 48"><rect x="4.500" y="7.500" width="38" height="33.500" fill="#1d1e1f" stroke="#6c6d70"/><path d="M6 9h35.500v31H6z" fill="none" stroke="#050505" stroke-width="2"/><text x="9.500" y="17" class="term exec-t">exec</text></svg></span>
  <i class="sep"></i>
  <!-- Terminal -->
  <span class="app"><svg viewBox="0 0 47 48"><rect x="6" y="7" width="35" height="35" rx="8" fill="#242425" stroke="#adb4b8" stroke-width="1.500"/><rect x="8" y="9" width="31" height="31" rx="6" fill="none" stroke="#050505" stroke-width="2.500"/><path d="M12 13.500l4 2.500-4 2.500M17.500 20.500H23" fill="none" stroke="#fff" stroke-width="1.500"/></svg></span>
  <!-- Packaged host -->
  <span class="app"><svg viewBox="0 0 47 48"><path d="M23.500 3l19 10.500q1 .5 1 2v18q0 1.500-1 2L25 45.500q-1.500 1-3 0L4.500 35.500q-1-.5-1-2v-18q0-1.500 1-2z" fill="#25a184"/><path d="M14 13h20v15H14z" fill="#c6cbcc"/><path d="M16 15h16v11H16z" fill="#8f9799"/><path d="M14 29h20v7H14z" fill="#e2e4e4"/><path d="M15 33h18" stroke="#34393b" stroke-width="1.500"/><ellipse cx="24" cy="20.500" rx="2.800" ry="4" fill="none" stroke="#f2f2f2" stroke-width="1.400"/><circle cx="6.500" cy="37.500" r="4.200" fill="#77777c"/><path d="M4.500 37h4v3h-4zM5.200 37v-1.500h2.500V37" fill="#202022" stroke="#202022" stroke-width=".8"/></svg></span>
  <!-- Disk utility -->
  <span class="app"><svg viewBox="0 0 47 48"><rect x="5" y="6" width="37" height="37" rx="8.500" fill="url(#gGrey)"/><path d="M16 11h-2.500l-1 5q0 8 6 10 5-3 5.500-10l-1-5h-2M18 26q-1 10 7 11" fill="none" stroke="#222428" stroke-width="1.400"/><path d="M28 24h13l3.500 20H25z" fill="#8e9ca3"/><circle cx="34" cy="30.500" r="5" fill="#d5dbde" stroke="#30373a" stroke-width="1.500"/><path d="M27 38h15" stroke="#3b454a"/><circle cx="34" cy="24" r="3.500" fill="none" stroke="#222428" stroke-width="1.500"/></svg></span>
  <i class="sep"></i>
  <!-- Disk image -->
  <span class="app"><svg viewBox="0 0 47 48"><path d="M29 8h9.500v25H29z" fill="#3ba2ea"/><path d="M9.500 4.500H26L38.500 17v28h-29z" fill="#fff"/><path d="M26 4.500q2.500 6 1 11 6-1.500 11.500 1.500z" fill="#dedfe0"/><path d="M16.500 20h14.500l2.500 19h-19z" fill="#7c878c"/><path d="M17.500 21h12.500v3H17.500z" fill="#303437"/><path d="M15 35h18" stroke="#aab3b7" stroke-width="2"/></svg></span>
  <!-- Trash -->
  <span class="app"><svg viewBox="0 0 47 48"><path d="M8.500 9h31L36 41q-.5 3.500-12 3.500T12 41z" fill="url(#gTrash)"/><ellipse cx="24" cy="10" rx="15.500" ry="3" fill="#4a4a4c"/><path d="M12 11l1-6 5 2 3-4 4 3 5-3 2 4 4-1 1 6q-12 3-25-1z" fill="#e9e9e9"/><path d="M15 7l3 3m3-4l2 4m4-3l-1 4m5-5l2 4" stroke="#54514d" stroke-width="1.300"/><path d="M23 6l3 1" stroke="#3ba2ea" stroke-width="2"/><path d="M18 16l2 25M24 16v26M30 16l-2 25M10 22q14 5 28 0M11 32q13 5 26 0" stroke="#6d6d70" stroke-width=".7" fill="none"/></svg></span>
</footer>
</body>
</html>
```
FILE: styles.css
```css
* { box-sizing: border-box; }

body {
  margin: 0;
  width: 1920px;
  height: 1080px;
  overflow: hidden;
  position: relative;
  font-family: Inter, "Liberation Sans", sans-serif;
  color: #f9f9fa;
  background:
    linear-gradient(90deg, #f04a48, #c02848 500px, rgba(42, 127, 190, 0) 560px) 0 24px / 100% 12px no-repeat,
    radial-gradient(ellipse 330px 110px at 1940px 1030px, #b8294c, rgba(150, 45, 90, .75) 50%, rgba(110, 55, 115, 0)),
    linear-gradient(90deg, #1b3a66 0, #293e72 400px, #3b3a70 900px, #473a74 1400px, #6a3b76 1750px, #8a3468 1920px);
}

svg { display: block; flex: none; }
.defs { position: absolute; width: 0; height: 0; }
p, h1, h2 { margin: 0; }

/* System menu bar */
.menubar {
  height: 25px;
  display: flex;
  justify-content: space-between;
  padding-bottom: 1px;
  font-size: 13px;
  font-weight: 500;
  background: linear-gradient(90deg, #c13b60 0, #bb3c64 240px, #a84a7a 400px, #875a8e 530px, #6b68a0 630px, #4b70aa 820px, #3b75b5 960px, #2873b2 1280px, #1b63aa 1600px, #195da5 1920px) 0 0 / 100% 24px no-repeat;
}
.menus {
  display: grid;
  grid-template-columns: 35px 65px 52px 86px 66px 67px 96px 58px 66px 60px;
  align-items: center;
  padding-left: 22px;
  letter-spacing: -.25px;
  line-height: 22px;
}
.menus b { font-weight: 700; letter-spacing: -.1px; }
.apple { width: 14px; height: 17px; margin-top: -1px; }
.status {
  display: grid;
  grid-template-columns: 39px 37px 34px 35px 34px 34px 40px 34px 33px 32px 31px 81px 35px;
  align-items: center;
  padding-right: 19px;
  letter-spacing: -.1px;
  line-height: 22px;
}
.status svg { width: 20px; height: 20px; }
.status svg:nth-child(7) { width: 28px; }
.status span { white-space: nowrap; padding-left: 3px; margin-top: -1px; }
.status .time { padding-left: 0; letter-spacing: -.15px; }

/* Editor window behind the browser */
.editor {
  position: absolute;
  left: 89px;
  top: 900px;
  width: 1793px;
  height: 132px;
  display: flex;
  justify-content: space-between;
  align-items: flex-end;
  padding: 0 19px 5px 17px;
  border: 1px solid #6a2c74;
  border-radius: 10px;
  background: #4d0857;
  box-shadow: 0 0 0 1px #160a20, 0 8px 26px rgba(0, 0, 0, .45);
  color: #b7a1ba;
  font-size: 14px;
}
.editor-left, .editor-right { display: flex; align-items: center; }
.editor-left { gap: 6px; }
.editor-right { gap: 20px; }
.editor-right svg + svg { margin-left: 2px; }
.editor svg { width: 16px; height: 16px; }

/* Browser window */
.window {
  position: relative;
  height: 992px;
  display: flex;
  flex-direction: column;
  overflow: hidden;
  border-radius: 10px;
  background: #323234;
}
.tabs {
  height: 33px;
  flex: none;
  display: grid;
  grid-template-columns: 105px repeat(10, 174.2px) 1fr;
  background: #0c0c0d;
  border-top: 1px solid #4c4c4f;
  font-size: 11px;
  font-weight: 500;
}
.lights { display: flex; align-items: center; gap: 8px; padding-left: 13px; }
.lights i { width: 12px; height: 12px; border-radius: 50%; }
.red { background: #ff544d; }
.amber { background: #fcb025; }
.green { background: #2dc440; }
.tab {
  display: grid;
  grid-template-columns: 16px 113px 12px;
  column-gap: 6px;
  align-items: center;
  padding-left: 9px;
  border-left: 1px solid #4a4a4c;
  color: #b4b4b6;
}
.tab span {
  overflow: hidden;
  white-space: nowrap;
  line-height: 20px;
  letter-spacing: -.06px;
  -webkit-mask-image: linear-gradient(90deg, #000 88px, transparent 116px);
  mask-image: linear-gradient(90deg, #000 88px, transparent 116px);
}
.tab.noisy { grid-template-columns: 16px 98px 14px 12px; column-gap: 5px; border-left: 0; padding-left: 10px; }
.tab.noisy span { margin-left: 1px; -webkit-mask-image: linear-gradient(90deg, #000 72px, transparent 98px); mask-image: linear-gradient(90deg, #000 72px, transparent 98px); }
.tab.active { background: #323234; color: #f9f9fa; border-left: 0; padding-left: 10px; box-shadow: inset 0 2px #0a84ff; margin-top: -1px; }
.fav { width: 16px; height: 16px; }
.x { width: 12px; height: 12px; }
.snd { width: 14px; height: 14px; }
.newtab { border-left: 1px solid #4a4a4c; display: flex; align-items: center; padding-left: 8px; }
.newtab svg { width: 16px; height: 16px; }

.toolbar { height: 40px; flex: none; display: flex; align-items: center; }
.nav { width: 250px; display: flex; align-items: center; gap: 16px; padding-left: 4px; }
.nav svg { width: 16px; height: 16px; }
.back {
  width: 32px;
  height: 32px;
  margin-right: -7px;
  display: grid;
  place-items: center;
  border-radius: 50%;
  background: #4d4d4f;
  box-shadow: 0 0 0 1px #29292b;
}
.urlbar {
  width: 1253px;
  height: 30px;
  display: flex;
  align-items: center;
  gap: 12px;
  padding: 0 6px 0 7px;
  border: 1px solid #5b5b5d;
  border-radius: 4px;
  background: #474749;
  color: #9c9c9e;
  font-size: 13.5px;
}
.urlbar svg { width: 16px; height: 16px; }
.url { flex: 1; margin-left: -9px; padding: 2px 0 0 2px; letter-spacing: .14px; }
.url b { color: #f9f9fa; font-weight: 500; }
.tools { display: flex; align-items: center; gap: 16px; padding-left: 125px; }
.tools svg { width: 16px; height: 16px; }
.bar { width: 1px; height: 34px; margin: 0 -1px 0 -5px; background: #5a5a5c; }
.tools .burger { width: 12px; height: 14px; }

.bookmarks {
  height: 29px;
  flex: none;
  display: grid;
  grid-template-columns: 90px 92px 86px 57px 76px 66px 57px 76px 56px 89px 79px 111px 112px 721px 140px;
  align-items: center;
  padding: 0 0 1px 12px;
  border-bottom: 1px solid #0c0c0d;
  font-size: 11px;
  font-weight: 500;
  letter-spacing: -.05px;
}
.bookmarks a { display: flex; align-items: center; gap: 4px; white-space: nowrap; }
.bookmarks svg { width: 16px; height: 16px; }

/* Certificate warning page */
.viewport { flex: 1; min-height: 0; border: 16px solid #ffe900; border-bottom: 0; background: #2a2a2e; }
.warning {
  display: grid;
  grid-template-columns: 74px 780px;
  justify-content: start;
  align-content: start;
  padding: 290px 0 0 480px;
  font-size: 15px;
  line-height: 19px;
  font-weight: 500;
  letter-spacing: -.29px;
  white-space: nowrap;
}
.warn-icon { width: 52px; height: 52px; }
.warning h1 { height: 67px; margin-top: -1px; margin-bottom: 1px; font-size: 32px; line-height: 40px; font-weight: 200; letter-spacing: -1.45px; }
.copy { grid-column: 2; height: 333px; display: flex; flex-direction: column; gap: 15px; }
.copy h2 { margin: 15px 0 0; font-size: 15px; line-height: 19px; font-weight: 700; letter-spacing: -.05px; }
.link { color: #45a1ff; }
.link.code { letter-spacing: -.15px; }
.buttons { display: flex; justify-content: flex-end; gap: 8px; margin-top: 7px; padding-right: 4px; }
.buttons button {
  width: 120px;
  height: 32px;
  padding: 0;
  border: 0;
  border-radius: 2px;
  background: #3e3e43;
  color: #f9f9fa;
  font: inherit;
  letter-spacing: -.25px;
}
.buttons .primary { width: 183px; background: #0060df; }
.panel {
  grid-column: 2;
  height: 240px;
  display: flex;
  flex-direction: column;
  gap: 19px;
  padding: 45px 45px;
  border: 1px solid #4a4a4f;
  background: #202023;
}

/* Dock */
.dock {
  position: absolute;
  left: 254px;
  top: 1019px;
  width: 1412px;
  height: 56px;
  display: flex;
  align-items: flex-start;
  padding: 1px 1px;
  border: 1px solid rgba(255, 255, 255, .2);
  border-radius: 14px;
  background: linear-gradient(90deg, #392c58 0, #3d2b57 250px, #45285a 600px, #4b2759 900px, #522657 1250px, #552556 1412px);
}
.app { width: 47.05px; height: 54px; display: flex; flex-direction: column; align-items: center; }
.app svg { width: 47px; height: 48px; }
.on::after { content: ""; width: 4px; height: 4px; border-radius: 50%; background: #b09cc9; }
.sep { flex: none; width: 1px; height: 42px; margin: 6px 10px 0 10px; background: rgba(255, 255, 255, .28); }

/* Lettering inside icons */
.dsm { font: 700 6px Inter, sans-serif; fill: #fff; }
.abp { font: 700 7px Inter, sans-serif; fill: #fff; }
.ama { font: 700 13px Inter, sans-serif; fill: #111; }
.kanji { font: 700 11px "Noto Sans CJK JP", sans-serif; fill: #e8353c; }
.pc { font: 700 14px Inter, sans-serif; fill: #fff; }
.term { font: 700 9px "DejaVu Sans Mono", monospace; }
.green-t { fill: #30d33c; }
.exec-t { font-size: 6.5px; fill: #3fbf4d; }
.cal { font: 700 7px "Liberation Serif", serif; fill: #d98e3a; }
.office { font: 700 14px Inter, sans-serif; fill: #fff; }
.cal-m { font: 700 7.5px Inter, sans-serif; fill: #fff; }
.cal-d { font: 300 22px Inter, sans-serif; fill: #2c2c2c; }
```
